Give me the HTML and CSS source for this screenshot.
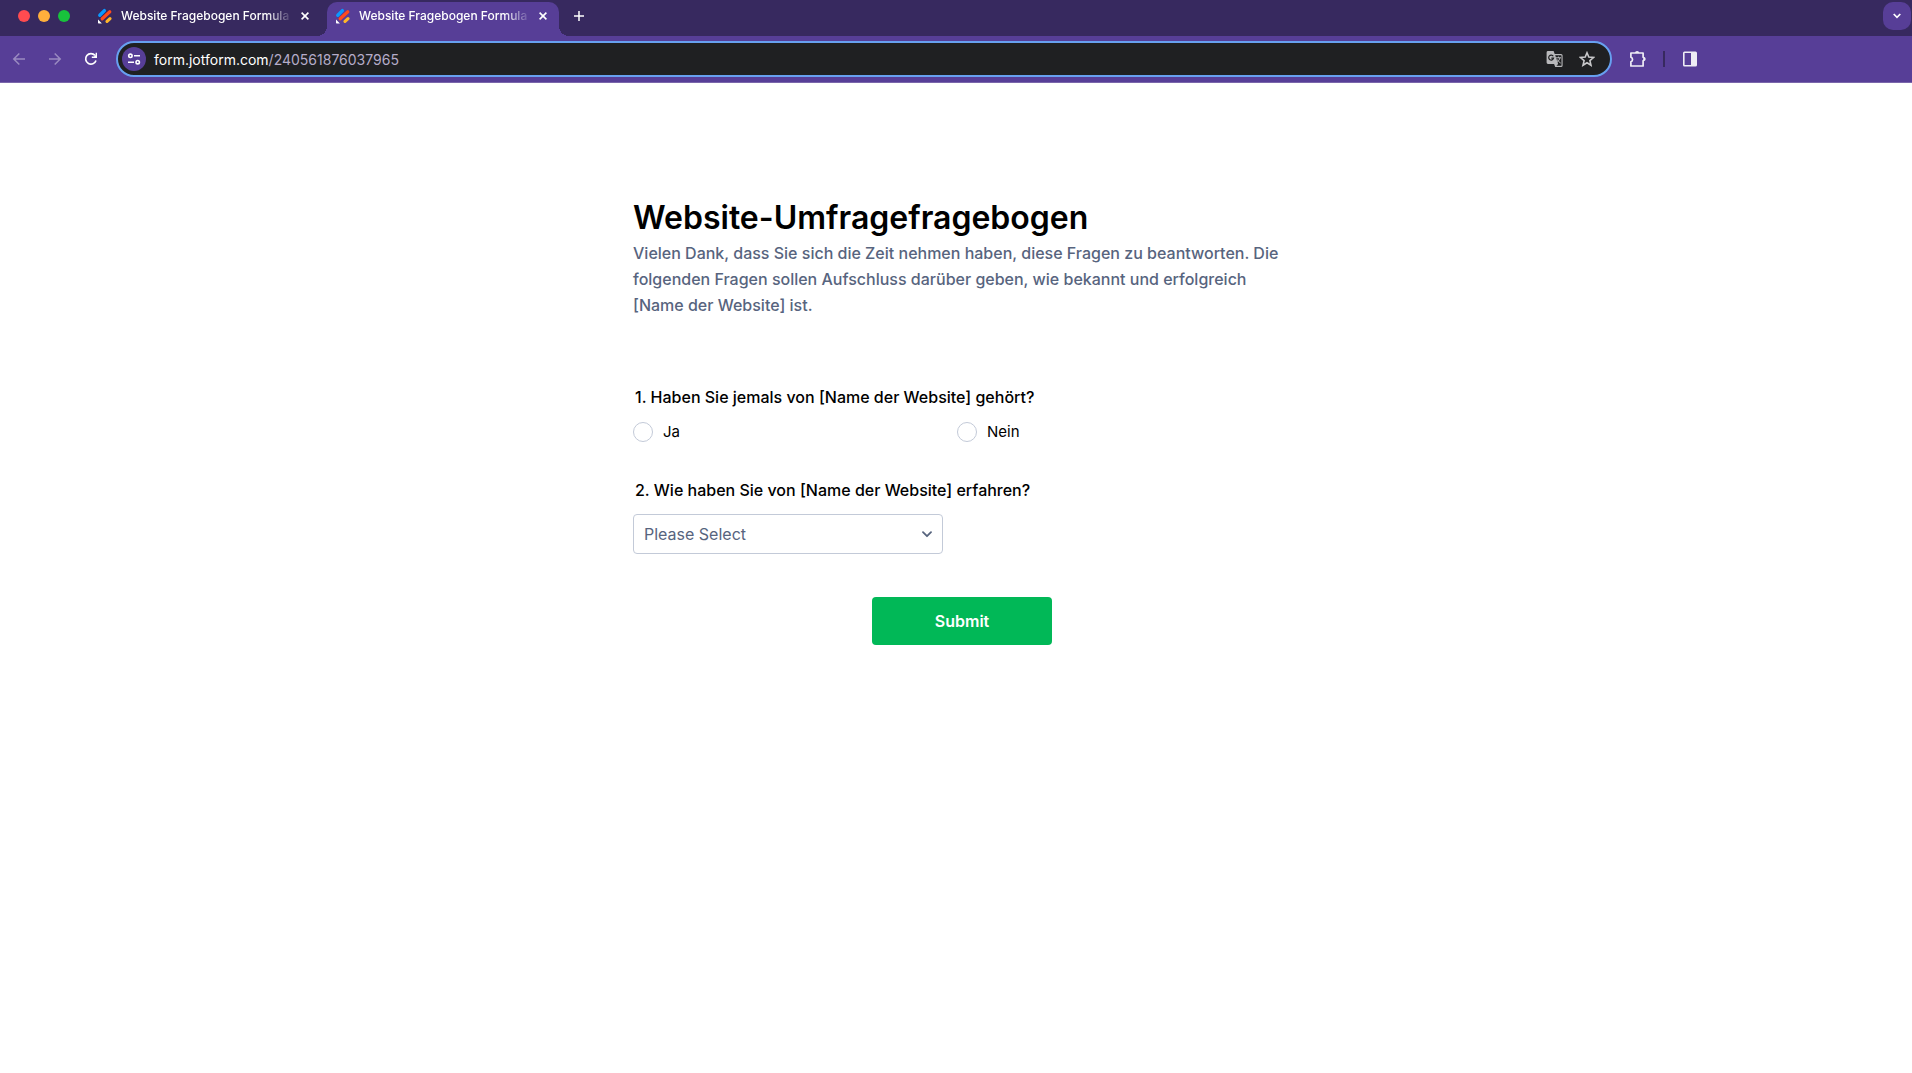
FILE: index.html
```html
<!DOCTYPE html>
<html lang="de">
<head>
    <meta charset="UTF-8">
    <meta name="viewport" content="width=device-width, initial-scale=1.0">
    <title>Website Fragebogen Formular</title>
    <link rel="stylesheet" href="styles.css">
</head>
<body>

<!-- logo shared by both tabs -->
<svg class="defs" width="0" height="0" aria-hidden="true">
    <symbol id="logo" viewBox="0 0 16 16">
        <path d="M2.8 7.2 7.4 2.6" stroke="#0a99ff" stroke-width="3.4" stroke-linecap="round"/>
        <path d="M5.2 10.8 12.8 3.8" stroke="#ff4a1c" stroke-width="3.2" stroke-linecap="round"/>
        <path d="M10 13.4 13 10.6" stroke="#ffb629" stroke-width="3.2" stroke-linecap="round"/>
        <path d="M1 11.6v3.2q0 .7.7.7h3.2z" fill="#fff"/>
    </symbol>
    <symbol id="close" viewBox="0 0 8 8">
        <path d="M.6.6l6.800 6.800M7.400.600L.600 7.400" stroke="#fff" stroke-width="1.6"/>
    </symbol>
</svg>

<header class="browser">
    <div class="tabs">
        <div class="lights">
            <span class="light red"></span>
            <span class="light yellow"></span>
            <span class="light green"></span>
        </div>
        <div class="tab">
            <svg class="favicon"><use href="#logo"/></svg>
            <span class="tab-title">Website Fragebogen Formula</span>
            <button class="close" aria-label="Close tab"><svg width="8" height="8"><use href="#close"/></svg></button>
        </div>
        <div class="tab active">
            <svg class="favicon"><use href="#logo"/></svg>
            <span class="tab-title">Website Fragebogen Formula</span>
            <button class="close" aria-label="Close tab"><svg width="8" height="8"><use href="#close"/></svg></button>
        </div>
        <button class="new-tab" aria-label="New tab">
            <svg width="10" height="10" viewBox="0 0 10 10"><path d="M5 0v10M0 5h10" stroke="#fff" stroke-width="1.5"/></svg>
        </button>
        <button class="tab-search" aria-label="Search tabs">
            <svg width="8" height="6" viewBox="0 0 8 6"><path d="M.7 1 4 4.3 7.3 1" fill="none" stroke="#fff" stroke-width="1.7"/></svg>
        </button>
    </div>

    <div class="toolbar">
        <button class="nav dim" aria-label="Back">
            <svg width="14" height="14" viewBox="0 0 14 14"><path d="M13 7H2M7.3 1.5 1.8 7l5.5 5.5" fill="none" stroke="currentColor" stroke-width="1.5"/></svg>
        </button>
        <button class="nav dim" aria-label="Forward">
            <svg width="14" height="14" viewBox="0 0 14 14"><path d="M1 7h11M6.7 1.5 12.2 7l-5.5 5.5" fill="none" stroke="currentColor" stroke-width="1.5"/></svg>
        </button>
        <button class="nav" aria-label="Reload">
            <svg width="14" height="14" viewBox="0 0 14 14"><path d="M12 8.500A5.300 5.300 0 1 1 11 3.400" fill="none" stroke="currentColor" stroke-width="1.700"/><path d="M13 .8V6H7.800V4.600h2.200L11.600 3V.8z" fill="currentColor"/></svg>
        </button>
        <div class="address">
            <button class="site-info" aria-label="Site information">
                <svg width="14" height="12" viewBox="0 0 14 12" fill="none" stroke="#fff" stroke-width="1.6"><circle cx="3.4" cy="2.8" r="1.7"/><path d="M7 2.8h6M1 9.2h6"/><circle cx="10.7" cy="9.2" r="1.7"/></svg>
            </button>
            <a class="url" href="#"><span class="domain">form.jotform.com</span>/240561876037965</a>
            <button class="icon" aria-label="Translate">
                <svg width="18" height="18" viewBox="0 0 18 18">
                    <path d="M2 1h5.600l1.100 3H15a1.600 1.600 0 0 1 1.600 1.600v9.800A1.600 1.600 0 0 1 15 17H9.200l-1.100-3H2A1.400 1.400 0 0 1 .6 12.600V2.400A1.400 1.400 0 0 1 2 1z" fill="#b9b9bb"/>
                    <path d="M9.200 5.200H15q.5 0 .5.500v9.600q0 .500-.500.500h-4.600l1.700-1.900z" fill="#1f2022"/>
                    <path d="M7.300 6.200A2.500 2.500 0 1 0 7.600 8.200H5.300" fill="none" stroke="#1f2022" stroke-width="1.200"/>
                    <path d="M10 7.800h5M12.500 6.600v1.200M14 7.800q-.7 3-3.200 4.700M11 9.300q1.200 2.200 3.700 3.800" fill="none" stroke="#b9b9bb"/>
                </svg>
            </button>
            <button class="icon" aria-label="Bookmark this tab">
                <svg width="16" height="16" viewBox="0 0 16 16"><path d="M8 1.800 9.800 6.100l4.700.4-3.600 3.100 1.100 4.600L8 11.700l-4 2.500 1.100-4.600L1.500 6.500l4.700-.4z" fill="none" stroke="#c8c8ca" stroke-width="1.600"/></svg>
            </button>
        </div>
        <button class="icon" aria-label="Extensions">
            <svg width="18" height="18" viewBox="0 0 18 18"><path d="M1.900 3h12.200v4.300a1.800 1.800 0 0 1 0 3.400V16H1.900v-4.300a2.300 2.300 0 0 0 0-4.400z" fill="none" stroke="#efedf5" stroke-width="1.700" stroke-linejoin="round"/><path d="M6 3a2.100 2.100 0 0 1 4.200 0zM14.600 6.900a2.100 2.100 0 0 1 0 4.200z" fill="#efedf5"/></svg>
        </button>
        <span class="divider"></span>
        <button class="icon" aria-label="Side panel">
            <svg width="16" height="16" viewBox="0 0 16 16"><path d="M2.500.500h11A1.500 1.500 0 0 1 15 2v12a1.500 1.500 0 0 1-1.500 1.500h-11A1.500 1.500 0 0 1 1 14V2A1.500 1.500 0 0 1 2.500.500zM2.600 2.100v11.800H9V2.100z" fill="#efedf5" fill-rule="evenodd"/></svg>
        </button>
    </div>
</header>

<main>
    <form class="form">
        <h1>Website-Umfragefragebogen</h1>
        <p class="intro">Vielen Dank, dass Sie sich die Zeit nehmen haben, diese Fragen zu beantworten. Die folgenden Fragen sollen Aufschluss darüber geben, wie bekannt und erfolgreich [Name der Website] ist.</p>

        <fieldset class="question">
            <legend class="question-title">1. Haben Sie jemals von [Name der Website] gehört?</legend>
            <div class="options">
                <label class="option"><input type="radio" name="known" value="Ja">Ja</label>
                <label class="option"><input type="radio" name="known" value="Nein">Nein</label>
            </div>
        </fieldset>

        <div class="question">
            <label class="question-title" for="source">2. Wie haben Sie von [Name der Website] erfahren?</label>
            <div class="select-wrap">
                <select id="source" name="source">
                    <option value="">Please Select</option>
                </select>
                <svg class="chevron" width="10" height="7" viewBox="0 0 10 7"><path d="M1 1.200l4 4 4-4" fill="none" stroke="#57647e" stroke-width="1.800" stroke-linecap="round" stroke-linejoin="round"/></svg>
            </div>
        </div>

        <button class="submit" type="submit">Submit</button>
    </form>
</main>

</body>
</html>
```
FILE: styles.css
```css
* {
    box-sizing: border-box;
}
body {
    margin: 0;
    background: #fff;
    color: #000;
    font-family: Inter, "Liberation Sans", sans-serif;
}
button {
    display: flex;
    align-items: center;
    justify-content: center;
    padding: 0;
    border: 0;
    background: none;
    font-family: inherit;
}
.defs {
    position: absolute;
}

/* browser window */
.tabs {
    display: flex;
    height: 36px;
    padding: 2px 1px 0 18px;
    background: #37295f;
}
.lights {
    display: flex;
    gap: 8px;
    width: 71px;
    padding-top: 8px;
}
.light {
    width: 12px;
    height: 12px;
    border-radius: 50%;
}
.red {
    background: #ff4b50;
}
.yellow {
    background: #ffaf3c;
}
.green {
    background: #18c23c;
}
.tab {
    display: flex;
    align-items: center;
    width: 232px;
    height: 34px;
    padding: 0 8px 6px;
    color: #fff;
}
.tab.active {
    position: relative;
    margin-left: 6px;
    border-radius: 10px 10px 0 0;
    background: #573e97;
}
/* flared feet of the active tab */
.tab.active::before,
.tab.active::after {
    content: "";
    position: absolute;
    bottom: 0;
    width: 10px;
    height: 10px;
}
.tab.active::before {
    right: 100%;
    background: radial-gradient(circle at 0 0, transparent 10px, #573e97 10px);
}
.tab.active::after {
    left: 100%;
    background: radial-gradient(circle at 100% 0, transparent 10px, #573e97 10px);
}
.favicon {
    flex: none;
    width: 16px;
    height: 16px;
    margin-right: 8px;
}
.tab-title {
    width: 168px;
    white-space: nowrap;
    font-size: 12px;
    font-weight: 500;
    line-height: 16px;
    mask-image: linear-gradient(to right, #000 145px, transparent 172px);
}
.close {
    flex: none;
    width: 16px;
    height: 16px;
    margin-left: 8px;
}
.new-tab {
    width: 28px;
    height: 28px;
    margin-left: 6px;
}
.tab-search {
    width: 28px;
    height: 28px;
    margin-left: auto;
    border-radius: 10px;
    background: #573e97;
}
.toolbar {
    display: flex;
    align-items: center;
    height: 47px;
    padding: 0 213px 0 5px;
    border-bottom: 1px solid #7a66ab;
    background: #573e97;
}
.nav {
    width: 28px;
    height: 28px;
    margin-right: 8px;
    color: #fff;
}
.dim {
    color: #9a8bc1;
}
.address {
    display: flex;
    flex: 1;
    align-items: center;
    height: 36px;
    margin-left: 3px;
    padding: 0 14px 0 4px;
    border: 2px solid #67a0f0;
    border-radius: 18px;
    background: #1f2022;
}
.site-info {
    width: 24px;
    height: 24px;
    border-radius: 50%;
    background: #573e97;
}
.url {
    flex: 1;
    margin-left: 8px;
    color: #b5acc9;
    font-size: 14px;
    text-decoration: none;
}
.domain {
    color: #fff;
}
.icon {
    width: 18px;
    height: 18px;
}
.address .icon + .icon {
    margin-left: 14px;
}
.address + .icon {
    margin-left: 17px;
}
.divider {
    width: 2px;
    height: 16px;
    margin: 0 16px;
    background: #37295f;
}

/* form */
.form {
    max-width: 752px;
    margin: 0 auto;
    padding: 115px 41px 40px 53px;
}
h1 {
    margin: 0 0 2px;
    font-size: 32px;
    font-weight: 600;
    line-height: 40px;
}
.intro {
    margin: 0 0 69px;
    color: #57647e;
    font-size: 16px;
    font-weight: 500;
    line-height: 26px;
}
.question {
    margin: 0 0 37px;
    padding: 0;
    border: 0;
}
.question-title {
    display: block;
    margin-bottom: 14px;
    padding: 0 2px;
    font-size: 16px;
    font-weight: 500;
    line-height: 20px;
}
.options {
    display: grid;
    grid-template-columns: 1fr 1fr;
    padding-right: 10px;
}
.option {
    display: flex;
    align-items: center;
    gap: 10px;
    font-size: 15px;
    line-height: 22px;
}
.option input {
    appearance: none;
    width: 20px;
    height: 20px;
    margin: 0;
    border: 1px solid #c3cad8;
    border-radius: 50%;
}
.option input:checked {
    border: 6px solid #2e69ff;
}
.select-wrap {
    position: relative;
    max-width: 310px;
}
select {
    appearance: none;
    display: block;
    width: 100%;
    height: 40px;
    padding: 0 10px;
    border: 1px solid #c3cad8;
    border-radius: 4px;
    background: #fff;
    color: #57647e;
    font-family: inherit;
    font-size: 16px;
}
.chevron {
    position: absolute;
    top: 17px;
    right: 11px;
    pointer-events: none;
}
.submit {
    width: 180px;
    height: 48px;
    margin: 43px auto 0;
    border-radius: 4px;
    background: #01b857;
    color: #fff;
    font-size: 16px;
    font-weight: 600;
}
```
